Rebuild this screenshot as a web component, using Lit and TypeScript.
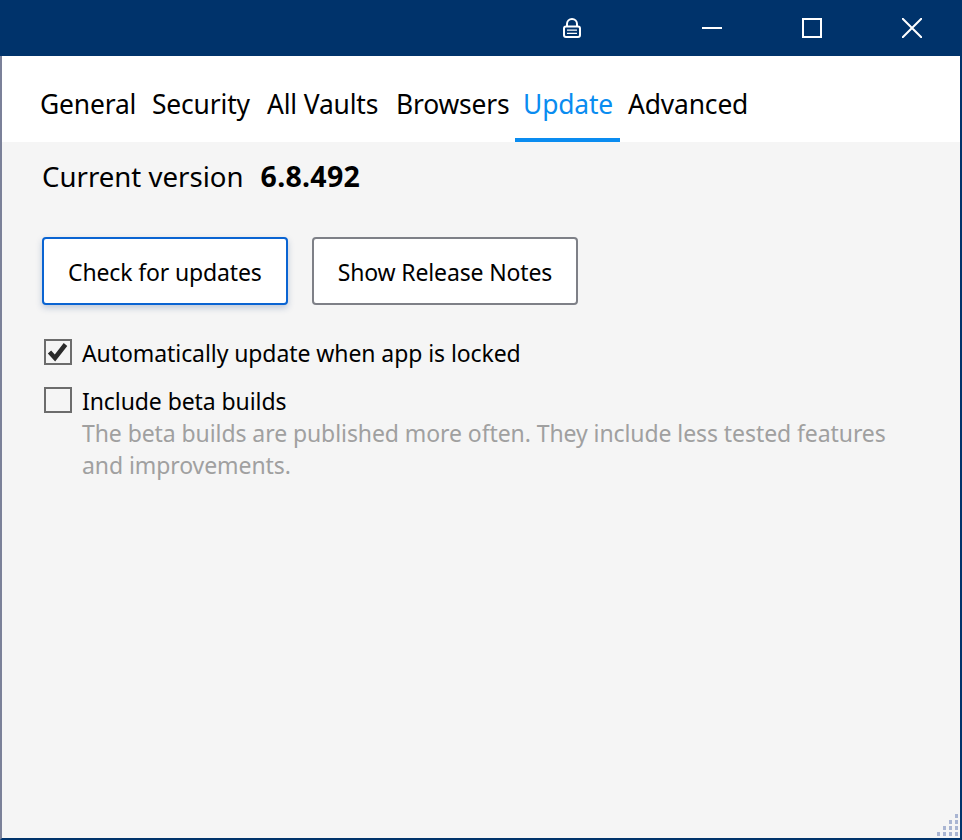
import { LitElement, html, css } from "lit";
import { customElement } from "lit/decorators.js";

const TABS = ["General", "Security", "All Vaults", "Browsers", "Update", "Advanced"];
const GRIP = [[18,0],[12,6],[18,6],[6,12],[12,12],[18,12],[0,18],[6,18],[12,18],[18,18]];

@customElement("app-root")
export class AppRoot extends LitElement {
  static styles = css`
    :host { display: block; width: 962px; height: 840px; font-family: "Noto Sans", "Open Sans", sans-serif; font-weight: 400; color: #000; }
    .win { position: relative; width: 962px; height: 840px; box-sizing: border-box; display: flex; flex-direction: column; background: #f5f5f5; border-left: 2px solid #7b8199; border-right: 2px solid #00336b; border-bottom: 2px solid #00336b; }
    .title { flex: none; height: 56px; margin: 0 -2px; background: #00336b; display: flex; align-items: center; position: relative; }
    .title svg { position: absolute; top: 18px; width: 20px; height: 20px; }
    .lock { left: 563px; }
    .title svg.lock { width: 18px; }
    .min { left: 702px; }
    .max { left: 802px; }
    .close { left: 902px; }
    .tabs { flex: none; height: 86px; background: #fff; display: grid; grid-template-columns: 112px 115px 129px 127px 105px auto; justify-content: start; padding-left: 30px; box-sizing: border-box; }
    .tab { padding: 0 8px; font-size: 26.4px; line-height: 96px; height: 86px; box-sizing: border-box; letter-spacing: -0.15px; white-space: nowrap; }
    .tab.on { color: #0a8cf0; border-bottom: 4px solid #0a8cf0; }
    .content { flex: 1; padding: 15px 40px 0; }
    .version { font-size: 27.6px; line-height: 38px; display: flex; gap: 17px; align-items: baseline; }
    .version b { font-weight: 700; font-size: 28.5px; letter-spacing: 0.3px; }
    .btns { display: flex; gap: 24px; margin-top: 42px; }
    .btn { height: 68px; box-sizing: border-box; background: #fff; border: 2px solid #7e8087; border-radius: 4px; font: inherit; font-size: 23px; letter-spacing: -0.14px; color: #000; padding: 2px 24px 0; display: flex; align-items: center; }
    .btn.focus { border-color: #0a64d2; box-shadow: 0 3px 6px rgba(30,70,130,.25); }
    .check { display: flex; gap: 10px; margin-top: 32px; margin-left: 2px; font-size: 23px; line-height: 32px; letter-spacing: -0.08px; }
    .check + .check { margin-top: 16px; }
    .box { flex: none; width: 28px; height: 26px; margin-top: 2px; box-sizing: border-box; border: 2px solid #6c6c6c; }
    .box svg { display: block; width: 24px; height: 22px; }
    .hint { color: #a0a0a0; margin-top: 0; width: 820px; }
    .grip { position: absolute; right: 2px; bottom: 2px; width: 21px; height: 22px; }
  `;

  render() {
    return html`
      <div class="win">
        <div class="title">
          <svg class="lock" viewBox="0 0 18 20" fill="none" stroke="#fff" stroke-width="2">
            <path d="M4 9V6a5 5 0 0 1 10 0v3"/>
            <rect x="1" y="8.5" width="16" height="10.5" rx="2"/>
            <path d="M4 12.2h10M4 15.4h10" stroke-width="1.3"/>
          </svg>
          <svg class="min" viewBox="0 0 20 20" stroke="#fff" stroke-width="2"><path d="M0 10h20"/></svg>
          <svg class="max" viewBox="0 0 20 20" fill="none" stroke="#fff" stroke-width="2"><rect x="1" y="1" width="18" height="18"/></svg>
          <svg class="close" viewBox="0 0 20 20" stroke="#fff" stroke-width="2"><path d="M0 0l20 20M20 0L0 20"/></svg>
        </div>
        <div class="tabs">
          ${TABS.map((t) => html`<div class="tab ${t === "Update" ? "on" : ""}">${t}</div>`)}
        </div>
        <div class="content">
          <div class="version"><span>Current version</span><b>6.8.492</b></div>
          <div class="btns">
            <div class="btn focus">Check for updates</div>
            <div class="btn">Show Release Notes</div>
          </div>
          <div class="check">
            <div class="box"><svg viewBox="0 0 24 22" fill="none" stroke="#2b2b2b" stroke-width="4.5"><path d="M3.5 11l5.5 6L19.5 3.5"/></svg></div>
            <div>Automatically update when app is locked</div>
          </div>
          <div class="check">
            <div class="box"></div>
            <div>Include beta builds
              <div class="hint">The beta builds are published more often. They include less tested features and improvements.</div>
            </div>
          </div>
        </div>
        <svg class="grip" viewBox="0 0 21 22" fill="#a9b5d2">
          ${GRIP.map(([x, y]) => html`<svg x=${x} y=${y} width="3" height="4"><rect width="3" height="4"/></svg>`)}
        </svg>
      </div>
    `;
  }
}
